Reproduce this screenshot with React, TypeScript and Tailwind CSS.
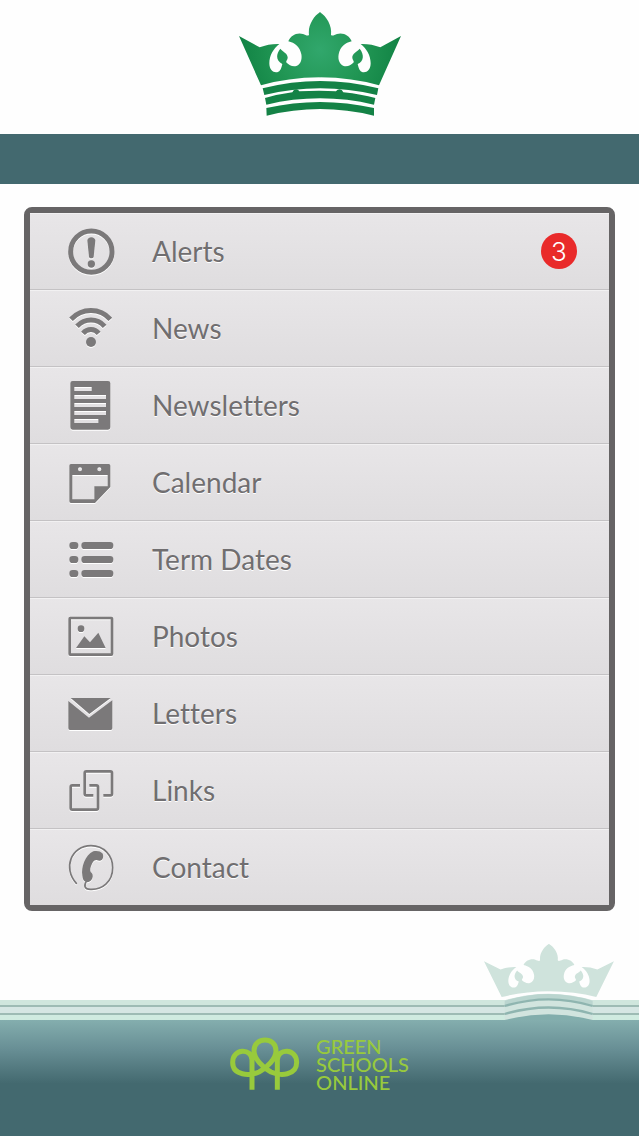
import type { ReactNode } from "react";

interface IconProps {
  viewBox: string;
  children: ReactNode;
}

const Icon = ({ viewBox, children }: IconProps) => (
  <svg
    viewBox={viewBox}
    fill="currentColor"
    aria-hidden="true"
    className="size-12 shrink-0 overflow-visible text-[#7b797a] drop-shadow-[0_1px_0_#ffffff]"
  >
    {children}
  </svg>
);

const AlertIcon = () => (
  <Icon viewBox="171 96 144 144">
    <circle cx="244" cy="170" r="62" fill="none" stroke="currentColor" strokeWidth="15" />
    <path d="M232 137C232 123 256 123 256 137L251 186C250 191 238 191 237 186Z" />
    <circle cx="244" cy="207" r="11" />
  </Icon>
);

const NewsIcon = () => (
  <Icon viewBox="171 324 144 144">
    <circle cx="243" cy="438" r="15" />
    <g fill="none" stroke="currentColor" strokeWidth="15">
      <path d="M183 370C216 335 270 335 301 370" />
      <path d="M201 391C225 366 261 366 284 391" />
      <path d="M219 412C232 397 254 397 266 412" />
    </g>
  </Icon>
);

const NewsletterIcon = () => (
  <Icon viewBox="51 45 144 144">
    <path
      fillRule="evenodd"
      d="M68 45H174Q181 45 181 52V184Q181 191 174 191H68Q61 191 61 184V52Q61 45 68 45ZM73 63V75H125V63ZM73 87V99H168V87ZM73 111V123H168V111ZM73 135V147H168V135ZM73 159V171H145V159Z"
    />
  </Icon>
);

const CalendarIcon = () => (
  <Icon viewBox="51 276 144 144">
    <path
      fillRule="evenodd"
      d="M63 294H176Q181 294 181 299V363L135 411H63Q58 411 58 406V299Q58 294 63 294ZM67 327V400H133V361H173V327ZM90 304A6 6 0 1 0 90 316A6 6 0 1 0 90 304ZM148 304A6 6 0 1 0 148 316A6 6 0 1 0 148 304Z"
    />
  </Icon>
);

const TermIcon = () => (
  <Icon viewBox="51 27 144 144">
    <rect x="58" y="48" width="27" height="21" rx="10" />
    <rect x="94" y="48" width="96" height="21" rx="10" />
    <rect x="58" y="90" width="27" height="21" rx="10" />
    <rect x="94" y="90" width="96" height="21" rx="10" />
    <rect x="58" y="132" width="27" height="21" rx="10" />
    <rect x="94" y="132" width="96" height="21" rx="10" />
  </Icon>
);

const PhotoIcon = () => (
  <Icon viewBox="51 258 144 144">
    <rect x="59" y="276" width="127" height="110" rx="2" fill="none" stroke="currentColor" strokeWidth="8" />
    <circle cx="93" cy="308" r="10" />
    <path d="M78 366L103 331L120 349L145 320L167 366Z" />
  </Icon>
);

const LetterIcon = () => (
  <Icon viewBox="51 24 144 144">
    <path d="M62 51H182L118 99Z" />
    <path d="M55 60L117 110L187 58V142Q187 147 182 147H60Q55 147 55 142Z" />
  </Icon>
);

const LinkIcon = () => (
  <Icon viewBox="51 255 144 144">
    <g fill="none" stroke="currentColor" strokeWidth="8" strokeLinejoin="round">
      <path d="M90 313H67Q62 313 62 318V381Q62 386 67 386H139Q144 386 144 381V318Q144 313 139 313H118" />
      <path d="M130 343H109Q104 343 104 338V276Q104 271 109 271H181Q186 271 186 276V338Q186 343 181 343H160" />
    </g>
  </Icon>
);

const ContactIcon = () => (
  <Icon viewBox="171 66 144 144">
    <path
      fill="none"
      stroke="currentColor"
      strokeWidth="5"
      strokeLinecap="round"
      d="M199 187C158 142 183 74 243 74C282 74 308 104 308 140C308 183 276 207 241 205C223 204 221 194 229 181"
    />
    <path d="M250 91C259 88 272 90 277 97C281 103 280 114 275 117C270 121 264 118 260 117C254 117 250 120 246 128C241 138 239 148 242 153C248 158 250 164 247 172C244 180 237 185 229 183C221 181 218 174 217 164C213 138 225 103 250 91Z" />
  </Icon>
);

// left half of the crown, mirrored around x = 285 for the right half
const CROWN_HALF =
  "M42 108L104 142Q132 131 163 132C146 145 133 166 133 190C133 208 143 217 153 217C164 217 168 209 172 192C154 184 151 165 166 146C175 157 189 160 188 174C187 181 181 184 185 188C192 195 202 201 214 198C226 194 232 179 229 163C225 141 209 128 190 124C196 107 216 96 234 102C242 105 249 110 252 104C248 78 266 48 285 37H286V232H285Q188 233 108 256Z";

const Crown = () => (
  <svg viewBox="39 33 492 318" role="img" aria-label="School crest" className="w-[164px]">
    <defs>
      <radialGradient id="crown" gradientUnits="userSpaceOnUse" cx="285" cy="150" r="260">
        <stop offset="0" stopColor="#31a76c" />
        <stop offset="0.5" stopColor="#219654" />
        <stop offset="1" stopColor="#0f8042" />
      </radialGradient>
    </defs>
    <g fill="url(#crown)">
      <path d={CROWN_HALF} />
      <path d={CROWN_HALF} transform="translate(570 0) scale(-1 1)" />
    </g>
    <g fill="#148246">
      <path d="M113 265Q285 221 460 265L456 285Q285 245 118 285Z" />
      <path d="M120 294Q158 283 202 277Q206 268 213 268Q220 268 223 274Q285 270 333 274Q337 268 344 268Q351 268 355 277Q410 283 451 294L447 314Q285 276 124 314Z" />
      <path d="M124 324Q285 288 447 324V347Q285 307 125 347Z" />
    </g>
  </svg>
);

const FooterCrown = () => (
  <svg
    viewBox="60 36 414 240"
    aria-hidden="true"
    className="absolute right-[21px] -top-[58px] w-[138px]"
  >
    <g fill="#cfe3dc" transform="translate(38.3 15.1) scale(0.802 0.727)">
      <path d={CROWN_HALF} />
      <path d={CROWN_HALF} transform="translate(570 0) scale(-1 1)" />
    </g>
    <path d="M134 211Q266 171 398 211V270H134Z" fill="#d1e4de" />
    <path d="M134 212Q266 172 398 212V226Q266 187 134 226Z" fill="#bad5cf" />
    <path d="M134 270Q266 236 398 270Z" fill="#82aeac" />
    <g fill="none" stroke="#8fb5b0" strokeWidth="7">
      <path d="M134 228Q266 188 398 228" />
      <path d="M134 252Q266 213 398 252" />
    </g>
  </svg>
);

const TreeLogo = () => (
  <svg viewBox="33 51 210 159" aria-hidden="true" className="w-[70px]">
    <path
      fill="none"
      stroke="#98ca3c"
      strokeWidth="15"
      d="M99 209V120C99 84 41 84 41 127C41 168 92 168 120 156C145 143 171 115 171 92C171 49 105 49 105 92C105 115 131 143 156 156C184 168 233 168 233 127C233 84 175 84 175 120V209"
    />
  </svg>
);

const menuItems = [
  { label: "Alerts", icon: <AlertIcon />, count: 3 },
  { label: "News", icon: <NewsIcon /> },
  { label: "Newsletters", icon: <NewsletterIcon /> },
  { label: "Calendar", icon: <CalendarIcon /> },
  { label: "Term Dates", icon: <TermIcon /> },
  { label: "Photos", icon: <PhotoIcon /> },
  { label: "Letters", icon: <LetterIcon /> },
  { label: "Links", icon: <LinkIcon /> },
  { label: "Contact", icon: <ContactIcon /> },
];

const App = () => {
  return (
    <div className="min-h-screen flex flex-col bg-[#fefefe] font-['Lato',sans-serif]">
      <header>
        <div className="flex justify-center pt-[11px] pb-[17px]">
          <Crown />
        </div>
        <div className="h-[50px] bg-[#43696f]" />
      </header>

      <main className="px-6 pt-[23px] pb-20">
        <nav className="rounded-lg border-6 border-[#666465] bg-[#e2e0e2]">
          <ul className="divide-y divide-[#c4c2c4]">
            {menuItems.map((item) => (
              <li key={item.label}>
                <a
                  href="#"
                  className="flex h-19 items-center gap-[37px] bg-linear-to-b from-[#e8e6e8] to-[#dfdddf] pl-[37px] pr-8 shadow-[inset_0_1px_0_#f2f1f2]"
                >
                  {item.icon}
                  <span className="text-[28px] leading-9 text-[#706e70] [font-variant-ligatures:none] [text-shadow:0_1px_0_#ffffff]">
                    {item.label}
                  </span>
                  {item.count && (
                    <span className="ml-auto flex size-9 items-center justify-center rounded-full bg-[#e92a2a] font-['Inter',sans-serif] text-[26px] font-light text-white">
                      {item.count}
                    </span>
                  )}
                </a>
              </li>
            ))}
          </ul>
        </nav>
      </main>

      <footer className="relative mt-auto">
        {/* Stripes */}
        <div className="h-[5px] bg-[#cfe6dd]" />
        <div className="h-[2px] bg-[#9dbbb4]" />
        <div className="h-[6px] bg-[#d5e6e3]" />
        <div className="h-[2px] bg-[#9dbbb4]" />
        <div className="h-[5px] bg-[#cfebe0]" />
        <FooterCrown />

        <div className="flex h-[116px] items-start justify-center gap-4 bg-linear-to-b from-[#84aeae] via-[#688f95] via-25% to-[#43696f] to-55% pt-[17px]">
          <TreeLogo />
          <p className="text-[20px] leading-[18px] font-medium text-[#98ca3c]">
            GREEN
            <br />
            SCHOOLS
            <br />
            ONLINE
          </p>
        </div>
      </footer>
    </div>
  );
};

export default App;
